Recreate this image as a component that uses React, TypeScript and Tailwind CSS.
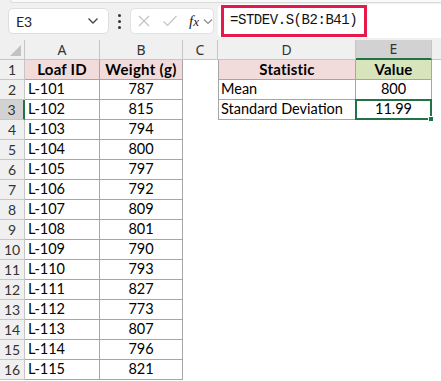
import React from 'react';

const rows: [string, number][] = [
  ['L-101', 787],
  ['L-102', 815],
  ['L-103', 794],
  ['L-104', 800],
  ['L-105', 797],
  ['L-106', 792],
  ['L-107', 809],
  ['L-108', 801],
  ['L-109', 790],
  ['L-110', 793],
  ['L-111', 827],
  ['L-112', 773],
  ['L-113', 807],
  ['L-114', 796],
  ['L-115', 821],
];

const cols = ['A', 'B', 'C', 'D', 'E'];

const stats: [string, string][] = [
  ['Mean', '800'],
  ['Standard Deviation', '11.99'],
];

function Toolbar() {
  return (
    <div className="h-[40px] bg-[#f0f0f0] relative">
      {/* ribbon edge */}
      <div className="ml-[10px] h-[3px] bg-[#f9f9f9] border-b border-l border-[#dcdcdc] rounded-bl-[4px]" />
      <div className="flex items-center h-[34px] pt-[2px]">
        <div className="ml-[8px] w-[101px] h-[26px] bg-white border border-[#dedede] rounded-[5px] flex items-center justify-between px-[7px]">
          <span className="text-[14px] text-[#222]">E3</span>
          <svg width="12" height="8" viewBox="0 0 12 8" className="mr-[2px]">
            <path d="M1.5 1.5 L6 6 L10.5 1.5" fill="none" stroke="#444" strokeWidth="1.3" />
          </svg>
        </div>
        <div className="w-[21px] flex flex-col items-center gap-[3px]">
          <span className="w-[3px] h-[3px] bg-[#333] rounded-full" />
          <span className="w-[3px] h-[3px] bg-[#333] rounded-full" />
          <span className="w-[3px] h-[3px] bg-[#333] rounded-full" />
        </div>
        <div className="w-[84px] h-[26px] bg-white border border-[#e2e2e2] rounded-[5px] flex items-center pl-[6px]">
          <svg width="14" height="14" viewBox="0 0 14 14">
            <path d="M2 2 L12 12 M12 2 L2 12" stroke="#c4c4c4" strokeWidth="1.2" />
          </svg>
          <svg width="16" height="14" viewBox="0 0 16 14" className="ml-[11px]">
            <path d="M1.5 7.5 L5.5 11.5 L14.5 2" fill="none" stroke="#c4c4c4" strokeWidth="1.2" />
          </svg>
          <span className="ml-[11px] text-[15px] italic text-[#222] font-['Liberation_Serif',serif] leading-none">
            f<span className="text-[13px]">x</span>
          </span>
          <svg width="10" height="7" viewBox="0 0 10 7" className="ml-[4px]">
            <path d="M1 1.5 L5 5.5 L9 1.5" fill="none" stroke="#888" strokeWidth="1.1" />
          </svg>
        </div>
        <div className="ml-[4px] flex-1 h-[34px] -mt-[1px] bg-white rounded-l-[5px] flex items-center pl-[3px]">
          <div className="h-[32px] w-[146px] border-[3px] border-[#e5194c] flex items-center pl-[6px]">
            <span className="font-['Liberation_Mono',monospace] text-[14px] tracking-[-0.45px] text-[#111]">
              =STDEV.S(B2:B41)
            </span>
          </div>
        </div>
      </div>
    </div>
  );
}

export default function App() {
  const grid = 'grid grid-cols-[25px_75px_83px_35px_138px_76px_1fr]';
  return (
    <div className="w-[441px] h-[381px] overflow-hidden bg-white font-['Lato','Liberation_Sans',sans-serif] text-[14.5px] text-black">
      <Toolbar />
      {/* column headers */}
      <div className={`${grid} h-[20px] bg-[#f0f0f0] text-[14px] text-[#333] font-['Noto_Sans','Liberation_Sans',sans-serif]`}>
        <div className="border-r border-b border-[#c6c6c6] relative">
          <div className="absolute right-[3px] bottom-[3px] w-0 h-0 border-l-[11px] border-l-transparent border-b-[11px] border-b-[#c2c2c2]" />
        </div>
        {cols.map((c) => (
          <div
            key={c}
            className={
              c === 'E'
                ? 'bg-[#d2d2d2] border-r border-[#c6c6c6] border-b-2 border-b-[#217346] flex items-center justify-center leading-none'
                : 'border-r border-b border-[#c6c6c6] flex items-center justify-center leading-none'
            }
          >
            {c}
          </div>
        ))}
        <div className="border-b border-[#c6c6c6]" />
      </div>

      {Array.from({ length: 16 }).map((_, i) => {
        const r = i + 1;
        const isHead = r === 1;
        const data = !isHead ? rows[i - 1] : null;
        const stat = r === 2 || r === 3 ? stats[r - 2] : null;
        return (
          <div key={r} className={`${grid} h-[20px]`}>
            <div
              className={
                r === 3
                  ? 'bg-[#d2d2d2] border-r-2 border-r-[#217346] border-b border-b-[#c6c6c6] flex items-center justify-center text-[14px] text-[#333] font-[\'Noto_Sans\',sans-serif] leading-none'
                  : 'bg-[#f0f0f0] border-r border-b border-[#c6c6c6] flex items-center justify-center text-[14px] text-[#333] font-[\'Noto_Sans\',sans-serif] leading-none'
              }
            >
              {r}
            </div>
            <div
              className={`border-r border-b border-[#a6a6a6] flex items-center px-[3px] leading-none ${
                isHead ? 'bg-[#f2dcdb] font-bold justify-center text-[15px] tracking-[0.2px]' : ''
              }`}
            >
              {isHead ? 'Loaf ID' : data![0]}
            </div>
            <div
              className={`border-r border-b border-[#a6a6a6] flex items-center justify-center leading-none ${
                isHead ? 'bg-[#f2dcdb] font-bold text-[15px] tracking-[0.3px]' : ''
              }`}
            >
              {isHead ? 'Weight (g)' : data![1]}
            </div>
            <div />
            {isHead ? (
              <>
                <div className="bg-[#f2dcdb] border-l border-r border-b border-[#a6a6a6] flex items-center justify-center font-bold text-[15px] tracking-[0.2px] leading-none">
                  Statistic
                </div>
                <div className="bg-[#d8e4bc] border-r border-b border-[#a6a6a6] flex items-center justify-center font-bold text-[15px] tracking-[0.2px] leading-none">
                  Value
                </div>
              </>
            ) : stat ? (
              <>
                <div className="border-l border-r border-b border-[#a6a6a6] flex items-center px-[2px] leading-none">
                  {stat[0]}
                </div>
                <div className="border-r border-b border-[#a6a6a6] flex items-center justify-center leading-none relative">
                  {stat[1]}
                  {r === 3 && (
                    <>
                      <div className="absolute -left-[1px] -top-[1px] -right-[1px] -bottom-[1px] border-2 border-[#217346]" />
                      <div className="absolute -right-[3px] -bottom-[3px] w-[6px] h-[6px] bg-[#217346] border border-white" />
                    </>
                  )}
                </div>
              </>
            ) : (
              <>
                <div />
                <div />
              </>
            )}
            <div />
          </div>
        );
      })}
    </div>
  );
}
